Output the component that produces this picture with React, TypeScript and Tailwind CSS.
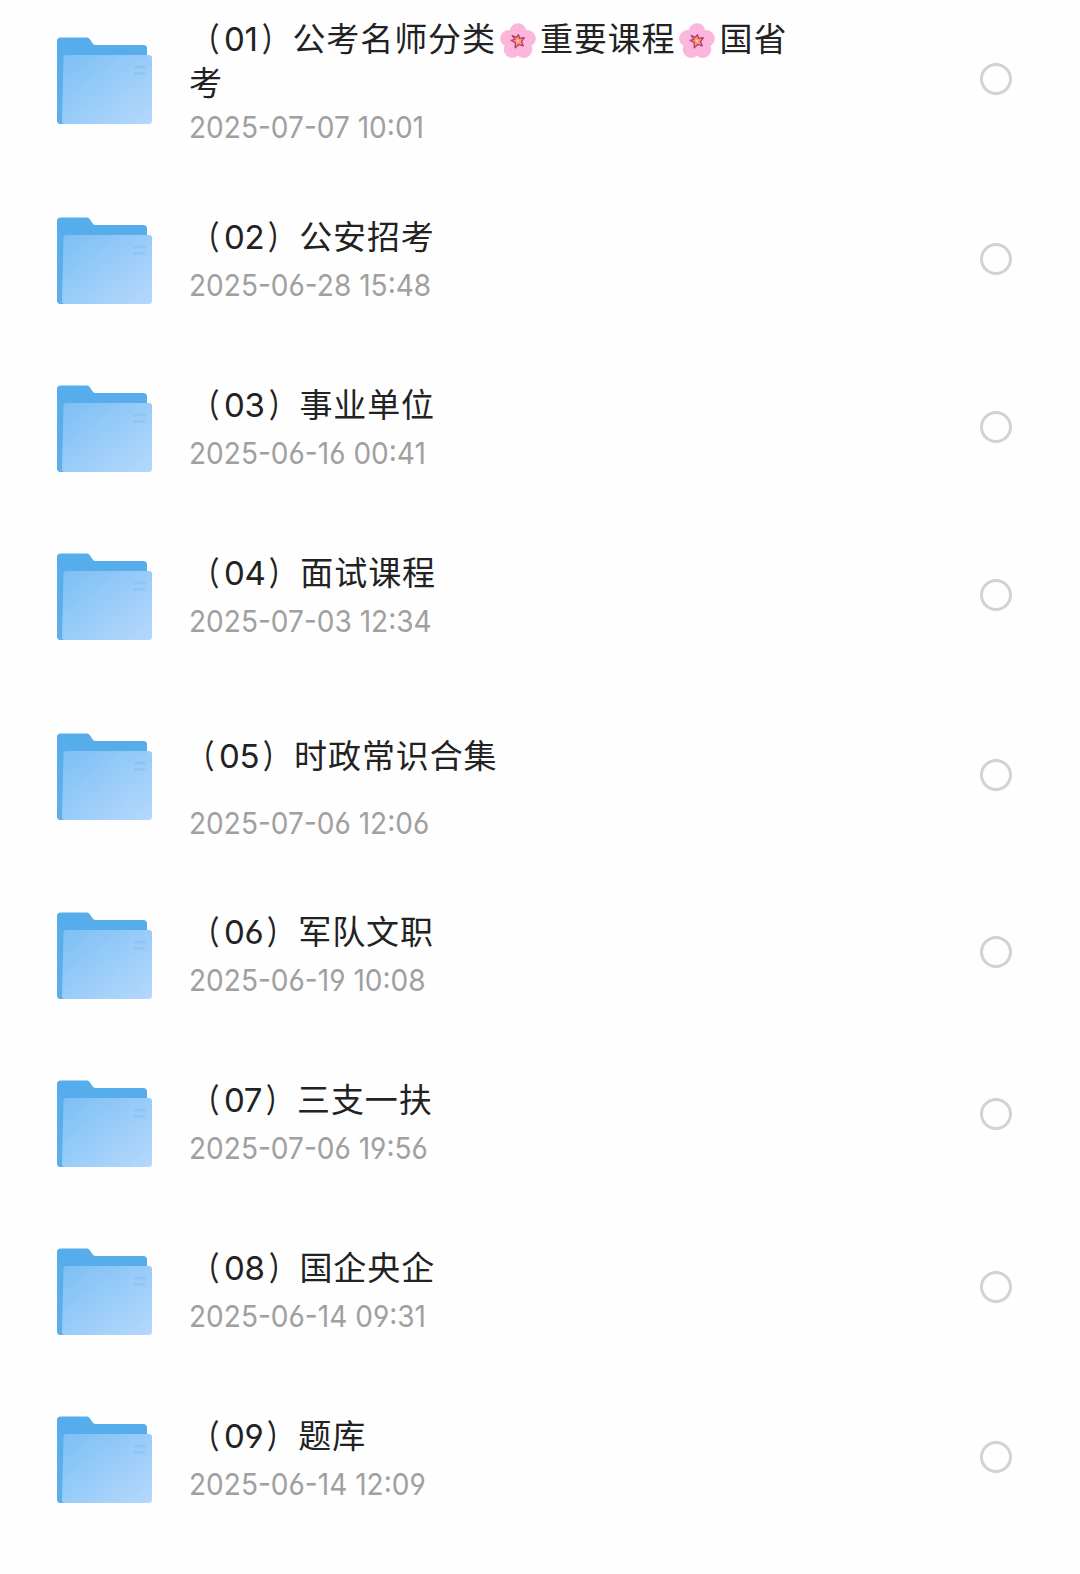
import * as React from 'react';

type Folder = {
  num: string;
  title: React.ReactNode;
  date: string;
  rowClass: string;
  folderClass?: string;
  titleClass?: string;
  dateClass?: string;
  radioClass: string;
};

const Blossom = () => (
  <svg viewBox="0 0 36 36" className="-my-1 mr-[3px] ml-[3px] inline-block h-[38px] w-[38px] align-[-5px]">
    <g fill="#fbb6dc">
      <ellipse cx="18" cy="9.200" rx="8" ry="8" />
      <ellipse cx="18" cy="9.200" rx="8" ry="8" transform="rotate(72 18 18.5)" />
      <ellipse cx="18" cy="9.200" rx="8" ry="8" transform="rotate(144 18 18.5)" />
      <ellipse cx="18" cy="9.200" rx="8" ry="8" transform="rotate(216 18 18.5)" />
      <ellipse cx="18" cy="9.200" rx="8" ry="8" transform="rotate(288 18 18.5)" />
    </g>
    <path
      d="M12.5 12.800l4 1.800 2-2.600 1 3.500 4.500-.8-2.700 3.800 1.700 4.200-4.200-1.400-3.500 3.200.2-4.800-4-2.300 3.600-.8z"
      fill="#f79a78"
      stroke="#b8356a"
      strokeWidth="1.2"
      strokeLinejoin="round"
    />
    <circle cx="18" cy="18" r="1.3" fill="#ffd08a" />
  </svg>
);

const FolderIcon = () => (
  <svg viewBox="0 0 96 88" className="h-22 w-24">
    <defs>
      <linearGradient id="back" x1="0" y1="0" x2="0" y2="1">
        <stop offset="0" stopColor="#55adeb" />
        <stop offset="1" stopColor="#5faeea" />
      </linearGradient>
      <linearGradient id="front" x1="0" y1="0" x2="1" y2="1">
        <stop offset="0" stopColor="#7dbff4" />
        <stop offset="0.45" stopColor="#96cbf8" />
        <stop offset="1" stopColor="#b5d8fc" />
      </linearGradient>
    </defs>
    <path
      d="M1 4a3.500 3.500 0 0 1 3.500-3.500H30c2 0 3.200.6 4.200 2.300l2.300 3.500c.8 1.300 1.500 1.700 3 1.700H87.500a3.500 3.500 0 0 1 3.500 3.500V80L12 87H4.500A3.500 3.500 0 0 1 1 83.500z"
      fill="url(#back)"
    />
    <path
      d="M7.500 21a3 3 0 0 1 3-3H93a3 3 0 0 1 3 3V84a3 3 0 0 1-3 3H9a3 3 0 0 1-3-3z"
      fill="url(#front)"
    />
    <path d="M79 30h10M79 36.500h9" stroke="#86bff0" strokeWidth="2.500" strokeLinecap="round" opacity="0.6" />
  </svg>
);

const folders: Folder[] = [
  {
    num: '01',
    title: <>公考名师分类<Blossom />重要课程<Blossom />国省<br />考</>,
    date: '2025-07-07 10:01',
    rowClass: 'h-[198px]',
    folderClass: 'pt-[20px]',
    dateClass: 'mt-[2px]',
    radioClass: 'mt-[46px]',
  },
  { num: '02', title: '公安招考', date: '2025-06-28 15:48', rowClass: 'h-[168px]', radioClass: 'mt-[28px]' },
  { num: '03', title: '事业单位', date: '2025-06-16 00:41', rowClass: 'h-[168px]', radioClass: 'mt-[28px]' },
  { num: '04', title: '面试课程', date: '2025-07-03 12:34', rowClass: 'h-[180px]', radioClass: 'mt-[28px]' },
  {
    num: '05',
    title: '时政常识合集',
    date: '2025-07-06 12:06',
    rowClass: 'h-[179px]',
    titleClass: 'mt-[3px] -ml-[5px]',
    dateClass: 'mt-[25px]',
    radioClass: 'mt-[28px]',
  },
  { num: '06', title: '军队文职', date: '2025-06-19 10:08', rowClass: 'h-[168px]', radioClass: 'mt-[26px]' },
  { num: '07', title: '三支一扶', date: '2025-07-06 19:56', rowClass: 'h-[168px]', radioClass: 'mt-[20px]' },
  { num: '08', title: '国企央企', date: '2025-06-14 09:31', rowClass: 'h-[168px]', radioClass: 'mt-[25px]' },
  { num: '09', title: '题库', date: '2025-06-14 12:09', rowClass: 'h-[160px]', radioClass: 'mt-[27px]' },
];

const FolderRow = ({ folder }: { folder: Folder }) => (
  <li className={`flex items-start pl-14 pr-[68px] ${folder.rowClass}`}>
    <div className={`shrink-0 ${folder.folderClass ?? 'pt-[2px]'}`}>
      <FolderIcon />
    </div>
    <div className="-mt-[2px] ml-[37px] flex-1 whitespace-nowrap">
      <div
        className={`font-['Noto_Sans_CJK_SC',sans-serif] text-[33px] leading-[44px] tracking-[0.9px] text-[#222] ${folder.titleClass ?? ''}`}
      >
        <span className="inline-block origin-right -translate-x-[3px] scale-x-75 leading-none font-medium">（</span>
        <span className="ml-px font-['Inter',sans-serif] leading-none tracking-[-0.3px] [font-feature-settings:'cv03','cv04']">
          {folder.num}
        </span>
        <span className="ml-px inline-block origin-left translate-x-[3px] scale-x-75 leading-none font-medium">）</span>
        {folder.title}
      </div>
      <div
        className={`origin-left scale-x-[0.935] font-['Inter',sans-serif] text-[30px] leading-[44px] font-normal text-[#a0a0a0] [font-feature-settings:'cv03','cv04'] ${folder.dateClass ?? 'mt-[6px]'}`}
      >
        {folder.date}
      </div>
    </div>
    <button
      type="button"
      aria-label={folder.num}
      className={`h-8 w-8 shrink-0 rounded-full border-3 border-[#d2d2d2] ${folder.radioClass}`}
    />
  </li>
);

const App = () => (
  <main className="h-[1574px] w-[1080px] overflow-hidden bg-[#fefefe] pt-[17px]">
    <ul>
      {folders.map((folder) => (
        <FolderRow key={folder.num} folder={folder} />
      ))}
    </ul>
  </main>
);

export default App;
